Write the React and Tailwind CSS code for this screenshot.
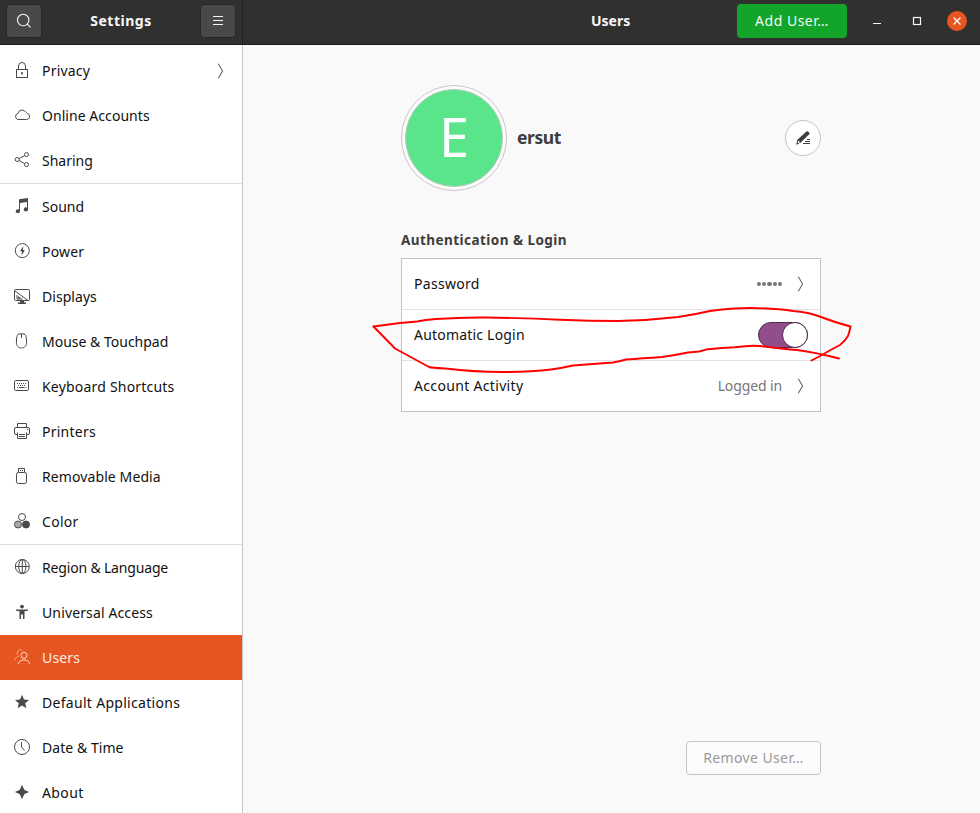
import React from "react";

const icons = {
  lock: (
    <>
      <rect x="2.5" y="7.5" width="11" height="8" />
      <path d="M4.5 7.5V4a3.5 3.5 0 0 1 7 0v3.5" />
      <path d="M7.2 10h1.6v2.6H7.2z" fill="currentColor" stroke="none" />
    </>
  ),
  cloud: <path d="M3.600 12.500h8.800a3.100 3.100 0 0 0 .9-6.100A2.800 2.800 0 0 0 11.800 5.200 4.200 4.200 0 0 0 4 6.400 3.200 3.200 0 0 0 3.600 12.500z" />,
  share: (
    <>
      <circle cx="3.2" cy="7.5" r="2" />
      <circle cx="12.5" cy="2.6" r="2" />
      <circle cx="12.5" cy="12.6" r="2" />
      <path d="M5 6.600l5.700-3M5 8.500l5.700 3.100" />
    </>
  ),
  music: (
    <path
      d="M5 1.2 14 0v11.500a2.100 2 0 1 1-1-1.800V4L6 4.900v8.400a2.100 1.900 0 1 1-1-1.700z"
      fill="currentColor"
      stroke="none"
    />
  ),
  power: (
    <>
      <circle cx="8.3" cy="7.6" r="7" />
      <path d="M9.3 3 6 8.3h1.9L7.6 12.4 10.9 7H8.9z" fill="currentColor" stroke="none" />
    </>
  ),
  display: (
    <>
      <rect x=".5" y="1.5" width="15" height="11" rx="1.2" />
      <path d="M1 3l13 9.500M3 7v4h5.500" />
      <path d="M4 8l3.500 2.500H4zM6 13h4v1.500h2V16H4v-1.500h2z" fill="currentColor" stroke="none" />
    </>
  ),
  mouse: (
    <>
      <path d="M5 1C6.800.6 8.200.6 10 1c1.800.4 2 2 2.300 4l.3 4c.2 3.500-1.800 6-5.100 6s-5.300-2.500-5.100-6l.3-4c.3-2 .5-3.600 2.300-4z" />
      <path d="M7.500 1v4" />
    </>
  ),
  keyboard: (
    <>
      <rect x=".5" y="2.500" width="14" height="10" rx="1.300" />
      <path d="M3 5.500h9.500M4 7.500h8" strokeDasharray="1 1" />
      <path d="M3 9.500h1M5 9.500h5.500M11.500 9.500h1" />
    </>
  ),
  printer: (
    <>
      <path d="M3.500 4V.5h9V4M3 11.500H2A1.500 1.500 0 0 1 .5 10V6A1.500 1.500 0 0 1 2 4.500h12A1.500 1.500 0 0 1 15.500 6v4a1.500 1.500 0 0 1-1.500 1.500h-1" />
      <path d="M3.500 9.500v6h9v-6M5 11.500h6M5 13.500h6" />
      <path d="M13 6h1v1h-1z" fill="currentColor" stroke="none" />
    </>
  ),
  usb: (
    <>
      <rect x="2.500" y="4.500" width="10" height="11" rx="1.800" />
      <path d="M4.500 4V.5h6V4M6 2.500h1M8 2.500h1" />
    </>
  ),
  color: (
    <>
      <circle cx="4" cy="11.500" r="3.500" fill="#aaa" />
      <circle cx="12" cy="11.500" r="3.500" fill="currentColor" />
      <circle cx="8" cy="4" r="3.500" fill="#fff" />
    </>
  ),
  globe: (
    <>
      <circle cx="8.300" cy="7.500" r="7" />
      <ellipse cx="8.300" cy="7.500" rx="3.600" ry="7" />
      <path d="M1.500 7.500h13.600M8.300.5v14" />
    </>
  ),
  access: (
    <g fill="currentColor" stroke="none">
      <circle cx="8" cy="2.600" r="1.900" />
      <path d="M2 5.500h12v1.200l-3.500.5V15H9v-4.500H7V15H5.500V7.200L2 6.700z" />
    </g>
  ),
  users: (
    <>
      <g opacity=".6">
        <path d="M8.500 1.500A3 3 0 1 0 4.300 6.200M.5 11.500C.8 9.300 2 8 4.500 7.500" />
      </g>
      <circle cx="10" cy="6.300" r="3" />
      <path d="M4.500 15c.3-3 2.300-4 5.500-4s5.200 1 5.500 4" />
    </>
  ),
  star: (
    <path
      d="M8 .8l2 4.700 5 .4-3.800 3.300 1.200 5L8 11.500 3.600 14.200l1.200-5L1 5.900l5-.4z"
      fill="currentColor"
      stroke="none"
    />
  ),
  clock: (
    <>
      <circle cx="8" cy="8" r="7.500" />
      <path d="M7.500 3v5l3 3.500" />
    </>
  ),
  spark: (
    <path
      d="M8 .8l2.200 5L15 8l-4.800 2.200L8 15.200l-2.200-5L1 8l4.800-2.200z"
      fill="currentColor"
      stroke="none"
    />
  ),
};

const groups = [
  [
    { icon: "lock", label: "Privacy", tracking: "tracking-[0.2px]", arrow: true },
    { icon: "cloud", label: "Online Accounts", tracking: "tracking-[0.05px]" },
    { icon: "share", label: "Sharing", tracking: "tracking-normal" },
  ],
  [
    { icon: "music", label: "Sound", tracking: "tracking-normal" },
    { icon: "power", label: "Power", tracking: "tracking-[0.2px]" },
    { icon: "display", label: "Displays", tracking: "tracking-[0.05px]" },
    { icon: "mouse", label: "Mouse & Touchpad", tracking: "tracking-normal" },
    { icon: "keyboard", label: "Keyboard Shortcuts", tracking: "tracking-[0.2px]" },
    { icon: "printer", label: "Printers", tracking: "tracking-[0.25px]" },
    { icon: "usb", label: "Removable Media", tracking: "tracking-[0.1px]" },
    { icon: "color", label: "Color", tracking: "tracking-[0.3px]" },
  ],
  [
    { icon: "globe", label: "Region & Language", tracking: "tracking-[-0.17px]" },
    { icon: "access", label: "Universal Access", tracking: "tracking-[0.13px]" },
    { icon: "users", label: "Users", tracking: "tracking-[0.15px]", active: true },
    { icon: "star", label: "Default Applications", tracking: "tracking-[0.3px]" },
    { icon: "clock", label: "Date & Time", tracking: "tracking-[0.05px]" },
    { icon: "spark", label: "About", tracking: "tracking-[0.4px]" },
  ],
];

function Chevron() {
  return (
    <svg className="h-4 w-2 shrink-0 text-[#666]" viewBox="0 0 8 16" fill="none" stroke="currentColor" strokeWidth="1.100">
      <path d="M2.300 .8 6.600 8l-4.300 7.200" />
    </svg>
  );
}

function SidebarItem({ icon, label, tracking, arrow, active }) {
  return (
    <li className={`flex h-[45px] items-center pr-[18px] pl-3.5 ${active ? "bg-[#e75520] text-white/90" : "text-[#111]"}`}>
      <svg
        className={`mr-3 mb-px size-4 shrink-0 ${active ? "text-white/75" : "text-[#4a4a4a]"}`}
        viewBox="0 0 16 16"
        fill="none"
        stroke="currentColor"
      >
        {icons[icon]}
      </svg>
      <span className={`flex-1 ${tracking}`}>{label}</span>
      {arrow && <Chevron />}
    </li>
  );
}

function Sidebar() {
  return (
    <nav className="h-full w-[243px] shrink-0 overflow-hidden border-r border-[#c4c4c4] bg-white pt-[3px]">
      {groups.map((items, i) => (
        <ul key={i} className={i > 0 ? "border-t border-[#dedede]" : ""}>
          {items.map((item) => (
            <SidebarItem key={item.label} {...item} />
          ))}
        </ul>
      ))}
    </nav>
  );
}

function Header() {
  return (
    <header className="flex h-[45px] shrink-0 border-b border-[#1c1c1b] bg-[#30302e] text-[#f7f7f7]">
      <div className="flex w-[243px] items-start justify-between border-r border-[#242422] px-1.5 pt-1">
        <button className="flex h-[34px] w-9 items-center justify-center rounded border border-[#272725] bg-[#4a4947]">
          <svg className="size-4" viewBox="0 0 16 16" fill="none" stroke="currentColor" strokeWidth="1.100">
            <circle cx="7.200" cy="7" r="5.700" />
            <path d="M11.300 11.200l3.200 3.200" />
          </svg>
        </button>
        <h1 className="text-sm leading-[34px] font-bold tracking-[0.5px]">Settings</h1>
        <button className="flex h-[34px] w-9 items-center justify-center rounded border border-[#272725] bg-[#4a4947]">
          <svg className="size-4" viewBox="0 0 16 16" stroke="currentColor">
            <path d="M3 3.500h10M3 7.500h10M3 11.500h10" />
          </svg>
        </button>
      </div>
      <div className="flex flex-1 items-start pt-1 pr-[13px]">
        <h2 className="ml-[348px] flex-1 text-sm leading-[34px] font-bold">Users</h2>
        <button className="h-[34px] w-[110px] rounded bg-[#12a52a] tracking-[0.5px]">Add User…</button>
        <svg className="ml-[22px] h-[34px] w-4" viewBox="0 0 16 34" stroke="currentColor">
          <path d="M4 19.500h8" />
        </svg>
        <svg className="ml-6 h-[34px] w-4" viewBox="0 0 16 34" fill="none" stroke="currentColor">
          <rect x="4.500" y="13.500" width="7" height="7" strokeWidth="1.200" />
        </svg>
        <span className="mt-[7px] ml-[22px] flex size-5 items-center justify-center rounded-full bg-[#e75520]">
          <svg className="size-2" viewBox="0 0 8 8" stroke="currentColor" strokeWidth="1.400">
            <path d="M.5.5l7 7M7.500.5l-7 7" />
          </svg>
        </span>
      </div>
    </header>
  );
}

function Profile() {
  return (
    <section className="flex h-[106px] items-center">
      <div className="flex size-[106px] items-center justify-center rounded-full border border-[#c6c6c6] bg-[#fcfcfc]">
        <div className="flex size-[98px] items-center justify-center rounded-full border border-[#b9c9bf] bg-[#5ae58b]">
          <span className="mb-[5px] text-[54px] leading-none text-white">E</span>
        </div>
      </div>
      <h3 className="mb-0.5 ml-2.5 flex-1 text-[17.5px] font-bold tracking-[-0.4px] text-[#3d3d3d]">ersut</h3>
      <button className="flex size-9 items-center justify-center rounded-full border border-[#c4c4c4] bg-white">
        <svg className="size-4 text-[#3d3d3d]" viewBox="0 0 16 16" fill="currentColor">
          <path d="M11.400 1.500q.8-.7 1.600 0l1.200 1.200q.7.800 0 1.600L6 12.200 1.200 15l1-5z" />
          <circle cx="3.700" cy="12" r="1" fill="#fff" />
          <path d="M12 9h3v1h-3zM10 11h5v1h-5zM8 13h7v1H8z" />
        </svg>
      </button>
    </section>
  );
}

function LoginPanel() {
  return (
    <div className="mt-2 flex flex-col divide-y divide-[#e1e1e1] border border-[#c2c2c2] bg-white">
      <div className="flex h-[51px] items-center pr-4 pl-3">
        <span className="flex-1 tracking-[0.3px] text-[#111]">Password</span>
        <span className="mr-3.5 flex gap-px">
          {[0, 1, 2, 3, 4].map((n) => (
            <span key={n} className="size-[4.200px] rounded-full bg-[#777]" />
          ))}
        </span>
        <Chevron />
      </div>
      <div className="flex h-[51px] items-center pr-3 pl-3">
        <span className="flex-1 tracking-[0.2px] text-[#111]">Automatic Login</span>
        <span className="flex h-[26px] w-[50px] justify-end rounded-full border border-[#4e2a4a] bg-[#924d8b]">
          <span className="-m-px size-[26px] rounded-full border border-[#4e2a4a] bg-white" />
        </span>
      </div>
      <div className="flex h-[50px] items-center pr-4 pl-3">
        <span className="flex-1 tracking-[0.33px] text-[#111]">Account Activity</span>
        <span className="mr-3.5 tracking-[-0.12px] text-[#777]">Logged in</span>
        <Chevron />
      </div>
    </div>
  );
}

function Annotation() {
  return (
    <svg
      className="pointer-events-none absolute top-0 left-0 h-[813px] w-[980px]"
      viewBox="0 0 980 813"
      fill="none"
      stroke="#f00"
      strokeWidth="1.900"
      strokeLinejoin="round"
      strokeLinecap="round"
    >
      <path d="M373.500 326.500L395 348.500L418 361L429 367Q431 367.800 445 368.500Q475 372 502 372Q530 372 551 369.500Q562 368 573 365.500L613 362.500Q619 361.500 626 359.500Q642 358.300 662 357Q676 355 688 352.500L699 351.500L708 349.200Q722 348 735 347.300Q750 345 760 346Q783 349 797 350Q816 352.500 839 358.500" />
      <path d="M373.500 326.500L400 323L417 321.500Q425 319.800 436 319Q460 317.300 485 317.500Q525 318 560 319.700Q590 321 618 321Q648 320.500 678 317Q695 314.500 710 311Q730 308 752 308Q777 308.500 793 311Q808 312 821 317Q834 322 850.500 326.500Q849.500 332 848 336Q845 341 840 345Q830 350 822 355L811.500 360.500" />
    </svg>
  );
}

export default function App() {
  return (
    <div className="relative flex h-[813px] w-[980px] flex-col overflow-hidden bg-[#f9f9f9] font-['Noto_Sans','Open_Sans',sans-serif] text-[14px] leading-5 tracking-normal">
      <Header />
      <div className="flex min-h-0 flex-1">
        <Sidebar />
        <main className="flex flex-1 flex-col pt-10 pr-[159px] pb-[38px] pl-[158px]">
          <Profile />
          <h4 className="mt-[39px] text-[13.500px] leading-5 font-bold tracking-[0.45px] text-[#3d3d3d]">
            Authentication &amp; Login
          </h4>
          <LoginPanel />
          <button className="mt-auto h-[34px] w-[135px] self-end rounded border border-[#c4c4c4] bg-[#fcfcfc] tracking-[0.38px] text-[#999]">
            Remove User…
          </button>
        </main>
      </div>
      <Annotation />
    </div>
  );
}
